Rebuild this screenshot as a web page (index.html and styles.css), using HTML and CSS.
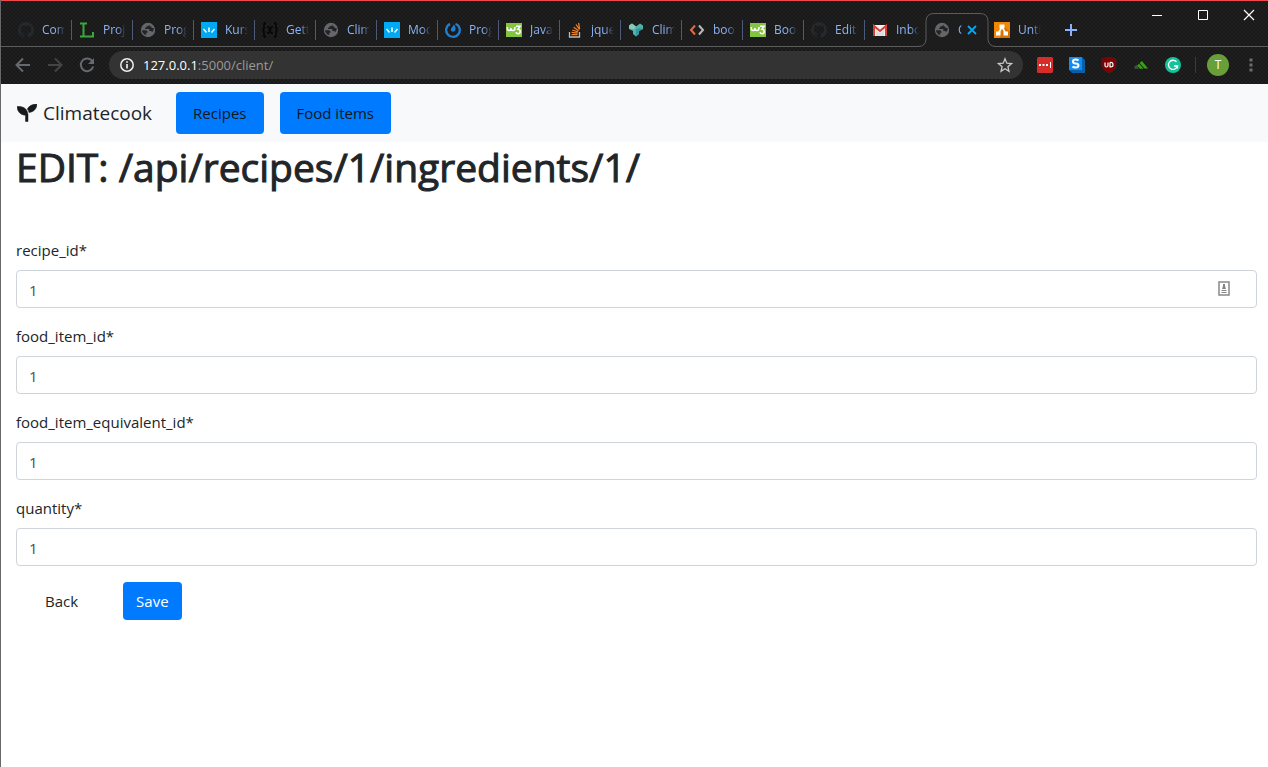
FILE: index.html
```html
<!DOCTYPE html>
<html lang="en">
<head>
<meta charset="utf-8">
<title>Climatecook</title>
<link rel="stylesheet" href="styles.css">
</head>
<body>
<svg class="defs" width="0" height="0" aria-hidden="true">
  <symbol id="github" viewBox="0 0 16 16"><path fill="#24292e" d="M8 0a8 8 0 0 0-2.500 15.600c.4.100.5-.2.500-.4v-1.400c-2.200.5-2.700-1-2.700-1-.4-.9-.9-1.200-.9-1.200-.7-.5.1-.5.1-.5.8.1 1.200.8 1.200.8.700 1.200 1.900.9 2.300.7.100-.5.300-.9.500-1.100-1.800-.2-3.600-.9-3.600-4 0-.9.300-1.600.8-2.100-.1-.2-.4-1 .1-2.100 0 0 .7-.2 2.200.8a7.600 7.600 0 0 1 4 0c1.500-1 2.200-.8 2.200-.8.400 1.100.2 1.900.1 2.100.5.600.8 1.300.8 2.100 0 3.100-1.900 3.800-3.600 4 .3.200.5.700.5 1.500v2.200c0 .2.100.5.500.4A8 8 0 0 0 8 0"/></symbol>
  <symbol id="globe" viewBox="0 0 16 16"><circle cx="8" cy="8" r="7.200" fill="#63666a"/><path d="M2 8.200h3.800q1.700.2 1.700 1.600v.9H6.200V13q-3.900-1-4.200-4.800zM9.300 2.600q-.2 1.600-1.600 1.600H6.400v1.500H5v1.400h4.300v2h1.300q1.200 0 1.500 1.200Q14 8.500 13.700 6h-2.200V4.500H9.900z" fill="#232323"/></symbol>
  <symbol id="kurs" viewBox="0 0 16 16"><path fill="#00a9f4" d="M0 0h16v16H0z"/><path d="M2.500 7l3 3.500M8 5.500V10M13.500 7l-3 3.500" fill="none" stroke="#fff" stroke-width="1.500"/></symbol>
  <symbol id="w3" viewBox="0 0 16 16"><path fill="#84c440" d="M0 1h16v14H0z"/><path d="M1.300 5v1.500q0 2 1.800 2t1.800-2V6v.5q0 2 2 2t2-2V5M10 4.300h4l-2 3q2.200 0 2.200 2.200t-2 2.200q-1.700 0-2.300-1.500" fill="none" stroke="#fff" stroke-width="1.600"/></symbol>
</svg>
<div class="browser">
  <header class="chrome">
    <div class="strip">
      <nav class="tabs" aria-label="Open tabs">
        <a class="tab" href="#"><svg><use href="#github"/></svg><span>Com</span></a>
        <a class="tab" href="#"><svg viewBox="0 0 16 16"><path d="M1 1.500h7M4.500 1.500v13M1 14.500h13V10" fill="none" stroke="#3aa83a" stroke-width="2"/></svg><span>Proje</span></a>
        <a class="tab" href="#"><svg><use href="#globe"/></svg><span>Prog</span></a>
        <a class="tab" href="#"><svg><use href="#kurs"/></svg><span>Kurss</span></a>
        <a class="tab" href="#"><svg viewBox="0 0 16 16"><path d="M4 1Q2 1 2 3v3L1 8l1 2v3q0 2 2 2M12 1q2 0 2 2v3l1 2-1 2v3q0 2-2 2M5 5q2-1 3 3t3 3M11 5q-2-1-3 3t-3 3" fill="none" stroke="#080808" stroke-width="1.800"/></svg><span>Getti</span></a>
        <a class="tab" href="#"><svg><use href="#globe"/></svg><span>Clim</span></a>
        <a class="tab" href="#"><svg><use href="#kurs"/></svg><span>Mod</span></a>
        <a class="tab" href="#"><svg viewBox="0 0 16 16"><path d="M10.500 1.700A6.800 6.800 0 1 1 5 1.900" fill="none" stroke="#1e7fcf" stroke-width="2.300"/><path d="M9 2.500c2 3 2.200 6 .1 7C6.500 10.300 5 8 6.500 6z" fill="#1e7fcf"/></svg><span>Prog</span></a>
        <a class="tab" href="#"><svg><use href="#w3"/></svg><span>Javas</span></a>
        <a class="tab" href="#"><svg viewBox="0 0 16 16"><path d="M2.500 10v5h10v-5" fill="none" stroke="#bcbbbb" stroke-width="1.300"/><path d="M4.500 12.700h6M4.600 10.400l6 .8M5.200 8l5.800 1.800M6.700 5.200l5 3.500M9 2.500l3.500 5M11.600 1l1 6" stroke="#f48024" stroke-width="1.300"/></svg><span>jquer</span></a>
        <a class="tab" href="#"><svg viewBox="0 0 16 16"><path d="M4 1.500l4 3 4-3 3 2v3.500l-4 2v3l-3 2.500-3-2.500V9L1 7V3.500z" fill="#4fb3a5"/><path d="M4 1.500l4 3-2 3-5-1V3.500z" fill="#86cabb"/><path d="M8 7v7.500l3-2.500V9l4-2-3-1z" fill="#3496a4"/></svg><span>Clim</span></a>
        <a class="tab" href="#"><svg viewBox="0 0 16 16"><path d="M6 3.500L2 8l4 4.500" fill="none" stroke="#e46b45" stroke-width="2"/><path d="M10 3.500L14 8l-4 4.500" fill="none" stroke="#b9b9b9" stroke-width="2"/></svg><span>boot</span></a>
        <a class="tab" href="#"><svg><use href="#w3"/></svg><span>Boot</span></a>
        <a class="tab" href="#"><svg><use href="#github"/></svg><span>Editin</span></a>
        <a class="tab tab-last" href="#"><svg viewBox="0 0 16 16"><path fill="#f1f1f1" d="M1 3h14v11H1z"/><path d="M4 8v6h8V8l-4 3z" fill="#ddd"/><path d="M2 14V4l6 5 6-5v10" fill="none" stroke="#d93e32" stroke-width="2"/></svg><span>Inbo</span></a>
        <div class="tab active">
          <svg class="outline" viewBox="0 0 78 35" aria-hidden="true"><path d="M0 33.500q8 0 8-8V8.500q0-8 8-8h46q8 0 8 8v17q0 8 8 8V35H0z" fill="#1d1d1d"/><path d="M0 33.500q8 0 8-8V8.500q0-8 8-8h46q8 0 8 8v17q0 8 8 8" fill="none" stroke="#5c5c5c"/></svg>
          <svg class="icon"><use href="#globe"/></svg><span>C</span>
          <button class="close" aria-label="Close tab"><svg viewBox="0 0 10 10"><path d="M1 1l8 8M9 1L1 9" stroke="#00a9f4" stroke-width="1.800"/></svg></button>
        </div>
        <a class="tab tab-last" href="#"><svg viewBox="0 0 16 16"><path fill="#f08705" d="M0 0h16v16H0z"/><path fill="#d97300" d="M9 3l7 7v6H6z"/><path d="M8 5L4.500 11M8 5l3.500 6" stroke="#fff" stroke-width="1.500"/><path fill="#fff" d="M5.500 2.500h5v4h-5zM2 9.500h4.500v4H2zM9.500 9.500H14v4H9.500z"/></svg><span>Untitl</span></a>
      </nav>
      <button class="new-tab" aria-label="New tab"><svg viewBox="0 0 12 12"><path d="M6 0v12M0 6h12" stroke="#8ab0ff" stroke-width="2"/></svg></button>
      <div class="window-controls">
        <button aria-label="Minimize"><svg viewBox="0 0 12 12"><path d="M1 6.500h10" stroke="#fff"/></svg></button>
        <button aria-label="Maximize"><svg viewBox="0 0 12 12"><path d="M1.500 1.500h9v9h-9z" fill="none" stroke="#fff"/></svg></button>
        <button aria-label="Close"><svg viewBox="0 0 12 12"><path d="M1 1l10 10M11 1L1 11" stroke="#fff" stroke-width="1.200"/></svg></button>
      </div>
    </div>
    <div class="toolbar">
      <div class="history">
        <button aria-label="Back"><svg viewBox="0 0 16 16"><path d="M15 8H2M8 1.500L1.500 8 8 14.500" fill="none" stroke="#66696d" stroke-width="2"/></svg></button>
        <button aria-label="Forward"><svg viewBox="0 0 16 16"><path d="M1 8h13M8 1.500L14.500 8 8 14.500" fill="none" stroke="#424446" stroke-width="2"/></svg></button>
        <button aria-label="Reload"><svg viewBox="0 0 16 16"><path d="M13.500 4.500A6.300 6.300 0 1 0 14.200 9.500" fill="none" stroke="#66696d" stroke-width="2"/><path d="M15 1v6H9z" fill="#66696d"/></svg></button>
      </div>
      <div class="address">
        <svg viewBox="0 0 16 16"><circle cx="8" cy="8" r="6.200" fill="none" stroke="#eee" stroke-width="1.500"/><path d="M8 7v4.500M8 4.200v1.600" stroke="#eee" stroke-width="1.700"/></svg>
        <div class="url"><b>127.0.0.1</b>:5000/client/</div>
        <button class="star" aria-label="Bookmark"><svg viewBox="0 0 16 16"><path d="M8 1.800l1.800 4.400 4.700.4-3.600 3.100 1.100 4.600L8 11.800l-4 2.500 1.100-4.600L1.500 6.600l4.700-.4z" fill="none" stroke="#c6c6c6" stroke-width="1.300"/></svg></button>
      </div>
      <div class="extensions">
        <svg viewBox="0 0 16 16"><rect width="16" height="16" rx="1.500" fill="#d62c2a"/><path d="M2 7h2v2H2zM5.500 7h2v2h-2zM9 7h2v2H9zM13 5h1v6h-1z" fill="#fff"/></svg>
        <svg viewBox="0 0 16 16"><path d="M0 13V0h13l3 3v13H3z" fill="#0760a8"/><path d="M0 0h13v13H0z" fill="#118cf5"/><path d="M9.500 3.500Q8.500 2.500 6.500 2.500 4 2.500 4 4.500t2.500 2q3 0 3 2t-3 2q-2 0-3-1" fill="none" stroke="#fff" stroke-width="2"/></svg>
        <svg viewBox="0 0 16 16"><path d="M8 0l7 2v6q0 5-7 8Q1 13 1 8V2z" fill="#800000" stroke="#5c2020" stroke-width=".6"/><path d="M4 5.500v3q0 1.500 1.500 1.500T7 8.500v-3M9 5.500v4.300q3 .5 3-2.100T9 5.500" fill="none" stroke="#fff" stroke-width="1.200"/></svg>
        <svg viewBox="0 0 16 16"><path d="M6.500 6L9 4l6 7.500h-3.500zM4 8.500L6 6.700l4.500 5H7z" fill="#36a012"/><path d="M1.500 9.500L3.500 8 6 11.700H1.500z" fill="#465044"/></svg>
        <svg viewBox="0 0 16 16"><circle cx="8" cy="8" r="8" fill="#15c39a"/><path d="M11.500 4.800A4.600 4.600 0 1 0 12.500 9H9M12.500 8.500v3" fill="none" stroke="#fff" stroke-width="1.300"/></svg>
      </div>
      <span class="divider"></span>
      <button class="avatar" aria-label="Profile">T</button>
      <button class="more" aria-label="Menu"><svg viewBox="0 0 4 14"><path d="M.5.500h3v3h-3zM.5 5.500h3v3h-3zM.5 10.500h3v3h-3z" fill="#6a6d70"/></svg></button>
    </div>
  </header>
  <nav class="navbar">
    <a class="brand" href="#"><svg viewBox="0 0 20 18"><path d="M0 2.500c6-.5 10.500 2 11 8v7H8.500v-6.200C3.500 11 .5 8 0 2.500zM20 0c-.2 5-3.500 8-8 8.500-.3-1.500-.8-2.500-1.700-3.500C12 1.800 15.500 0 20 0z" fill="#161a1d" stroke="#161a1d" stroke-width=".5"/></svg>Climatecook</a>
    <a class="nav-button" href="#">Recipes</a>
    <a class="nav-button" href="#">Food items</a>
  </nav>
  <main class="content">
    <h1>EDIT: /api/recipes/1/ingredients/1/</h1>
    <form>
      <div class="field"><label for="recipe">recipe_id*</label>
        <div class="control"><input id="recipe" type="text" value="1"><svg class="autofill" viewBox="0 0 12 16"><rect x="1" y="1" width="10" height="13" fill="#fff" stroke="#909090" stroke-width="1.600"/><path d="M5 3h2v2l1 3H4l1-3zM3.500 9h5v1h-5zM3.500 11h5v1h-5z" fill="#858585"/></svg></div></div>
      <div class="field"><label for="food">food_item_id*</label><input id="food" type="text" value="1"></div>
      <div class="field"><label for="equivalent">food_item_equivalent_id*</label><input id="equivalent" type="text" value="1"></div>
      <div class="field"><label for="quantity">quantity*</label><input id="quantity" type="text" value="1"></div>
      <div class="actions"><a class="back" href="#">Back</a><button class="save" type="submit">Save</button></div>
    </form>
  </main>
</div>
</body>
</html>
```
FILE: styles.css
```css
* { box-sizing: border-box; }
body { margin: 0; background: #fff; color: #212529; font-family: "Segoe UI", "Open Sans", sans-serif; font-size: 15px; line-height: 24px; }
a { color: inherit; text-decoration: none; }
button { border: 0; padding: 0; background: none; font: inherit; }
svg { display: block; flex: none; }
.defs { position: absolute; }
.browser { min-height: 100vh; border-left: 1px solid #68686b; }

.chrome { border-top: 1px solid #f0484c; background: #202020 conic-gradient(#181818 25%, transparent 0 50%, #181818 0 75%, transparent 0) 0 0 / 4px 4px; }
.strip { display: flex; height: 46px; padding-left: 10px; border-bottom: 1px solid #5c5c5c; }
.tabs { display: flex; align-items: flex-end; }
.tab { position: relative; display: flex; align-items: center; gap: 8px; width: 61px; height: 33px; padding-left: 7px; color: #8ab4f8; font-size: 12px; line-height: 20px; }
.tab svg { width: 16px; height: 16px; }
.tab span { width: 23px; overflow: hidden; white-space: nowrap; mask-image: linear-gradient(to right, #000 60%, transparent); }
.tab::after { content: ""; width: 1px; height: 20px; position: absolute; right: 0; background: #4c5a78; }
.tab-last::after, .active::after { display: none; }
.active { padding-left: 8px; }
.active .outline { position: absolute; left: -8px; top: 0; width: 78px; height: 35px; }
.active .icon { position: relative; }
.active span { position: relative; width: 4px; }
.active .close { position: relative; margin-left: -3px; }
.tab .close svg { width: 10px; height: 10px; }
.new-tab { width: 12px; margin: 13px 0 0 17px; }
.new-tab svg { width: 12px; height: 12px; }
.window-controls { display: flex; align-items: flex-start; gap: 34px; margin-left: auto; padding: 8px 13px 0 0; }
.window-controls svg { width: 12px; height: 12px; }

.toolbar { display: flex; align-items: center; height: 37px; padding: 0 15px 2px 0; }
.history { display: flex; gap: 16px; padding: 0 14px; }
.history svg { width: 16px; height: 16px; }
.address { display: flex; flex: 1; align-items: center; height: 28px; padding: 0 10px; border-radius: 14px; background: #333; }
.address svg { width: 16px; height: 16px; }
.url { flex: 1; margin-left: 8px; color: #9a9a9a; font-size: 13px; line-height: 20px; }
.url b { color: #fff; font-weight: 400; }
.extensions { display: flex; gap: 16px; margin-left: 14px; }
.extensions svg { width: 16px; height: 16px; }
.divider { width: 1px; height: 16px; margin: 0 11px 0 14px; background: #3b3b3b; }
.avatar { width: 22px; height: 22px; border-radius: 50%; background: #689f38; color: #fff; font-size: 12px; line-height: 22px; }
.more { margin-left: 20px; }
.more svg { width: 4px; height: 14px; }

.navbar { display: flex; align-items: center; gap: 16px; padding: 8px 16px; background: #f8f9fa; }
.brand { display: flex; align-items: center; gap: 6px; margin-right: 8px; font-size: 19px; line-height: 30px; }
.brand svg { width: 20px; height: 18px; }
.nav-button { padding: 9px 17px; border-radius: 4px; background: #007bff; color: #101820; }

.content { padding: 1px 11px 0 15px; }
h1 { margin: 0 0 47px; font-size: 39px; font-weight: 400; line-height: 48px; -webkit-text-stroke: 1px currentColor; }
.field { display: flex; flex-direction: column; gap: 8px; margin-bottom: 16px; }
.field label { align-self: flex-start; }
.control { position: relative; }
input { display: block; width: 100%; height: 38px; padding: 8px 12px 6px; border: 1px solid #ced4da; border-radius: 4px; background: #fff; color: #495057; font: inherit; }
.autofill { position: absolute; right: 27px; top: 11px; width: 12px; height: 16px; }
.actions { display: flex; gap: 32px; }
.back { padding: 7px 13px 7px 29px; }
.save { padding: 7px 13px; border-radius: 4px; background: #007bff; color: #fff; }
```
